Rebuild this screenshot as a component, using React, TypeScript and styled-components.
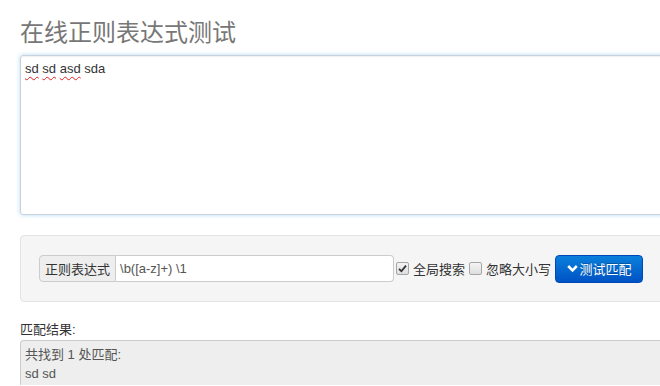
import styled, { createGlobalStyle } from 'styled-components';

const GlobalStyle = createGlobalStyle`
  body {
    margin: 0;
    overflow: hidden;
    background: #fff;
    color: #333;
    font-family: "Liberation Sans", "Noto Sans CJK SC", sans-serif;
    font-size: 13px;
  }
`;

const Page = styled.div`
  width: 720px;
  padding: 18px 0 0 20px;
`;

const Title = styled.h1`
  margin: 0 0 7px;
  font-size: 24px;
  line-height: 30px;
  font-weight: normal;
  color: #777;
`;

const Editor = styled.div`
  height: 150px;
  padding: 4px;
  border: 1px solid #c9d2da;
  border-radius: 3px;
  box-shadow: inset 0 1px 1px rgba(0, 0, 0, 0.06), 0 0 4px rgba(82, 168, 236, 0.45);
  line-height: 18px;
  color: #333;
`;

const Misspelled = styled.span`
  text-decoration: underline wavy #e02020;
  text-decoration-thickness: 1px;
  text-underline-offset: 3px;
`;

const Well = styled.div`
  margin-top: 20px;
  height: 27px;
  padding: 19px 18px;
  background: #f5f5f5;
  border: 1px solid #e3e3e3;
  border-radius: 4px;
  display: flex;
  align-items: center;
`;

const InputGroup = styled.div`
  display: flex;
  height: 27px;
`;

const Addon = styled.span`
  display: flex;
  align-items: center;
  padding: 0 5px;
  background: #eee;
  border: 1px solid #ccc;
  border-radius: 4px 0 0 4px;
  color: #333;
`;

const Input = styled.div`
  width: 273px;
  display: flex;
  align-items: center;
  padding: 0 0 0 4px;
  background: #fff;
  border: 1px solid #ccc;
  border-left: none;
  border-radius: 0 4px 4px 0;
  color: #555;
`;

const Option = styled.label<{ $gap: number }>`
  display: flex;
  align-items: center;
  margin-left: ${(p) => p.$gap}px;
  color: #333;
`;

const Box = styled.span`
  width: 11px;
  height: 11px;
  margin-right: 4px;
  border: 1px solid #a6a6a6;
  border-radius: 2px;
  background: linear-gradient(#f4f4f4, #dedede);
  display: flex;
  align-items: center;
  justify-content: center;
`;

const Button = styled.button`
  margin-left: 4px;
  height: 28px;
  width: 88px;
  display: flex;
  align-items: center;
  justify-content: center;
  gap: 2px;
  padding: 0;
  border: 1px solid #0048b8;
  border-radius: 4px;
  background: linear-gradient(#0a80dc, #0052c4);
  color: #fff;
  font: inherit;
  text-shadow: 0 -1px 0 rgba(0, 0, 0, 0.25);
`;

const ResultLabel = styled.div`
  margin-top: 18px;
  line-height: 20px;
`;

const Result = styled.div`
  height: 36px;
  padding: 4px;
  background: #eee;
  border: 1px solid #ccc;
  border-bottom: none;
  border-radius: 4px 4px 0 0;
  line-height: 19px;
  color: #555;
`;

function Check({ checked }: { checked: boolean }) {
  return (
    <Box>
      {checked && (
        <svg width="9" height="9" viewBox="0 0 9 9">
          <path d="M1 4.8 L3.4 7.2 L8 1.6" fill="none" stroke="#333" strokeWidth="1.8" />
        </svg>
      )}
    </Box>
  );
}

export default function App() {
  return (
    <>
      <GlobalStyle />
      <Page>
        <Title>在线正则表达式测试</Title>
        <Editor>
          <Misspelled>sd</Misspelled> <Misspelled>sd</Misspelled>{' '}
          <Misspelled>asd</Misspelled> sda
        </Editor>

        <Well>
          <InputGroup>
            <Addon>正则表达式</Addon>
            <Input>\b([a-z]+) \1</Input>
          </InputGroup>
          <Option $gap={2}>
            <Check checked />
            全局搜索
          </Option>
          <Option $gap={4}>
            <Check checked={false} />
            忽略大小写
          </Option>
          <Button>
            <svg width="11" height="9" viewBox="0 0 11 9">
              <path d="M1.2 2 L5.5 6.3 L9.8 2" fill="none" stroke="#fff" strokeWidth="2.6" />
            </svg>
            测试匹配
          </Button>
        </Well>

        <ResultLabel>匹配结果:</ResultLabel>
        <Result>
          共找到 1 处匹配:
          <br />
          sd sd
        </Result>
      </Page>
    </>
  );
}
